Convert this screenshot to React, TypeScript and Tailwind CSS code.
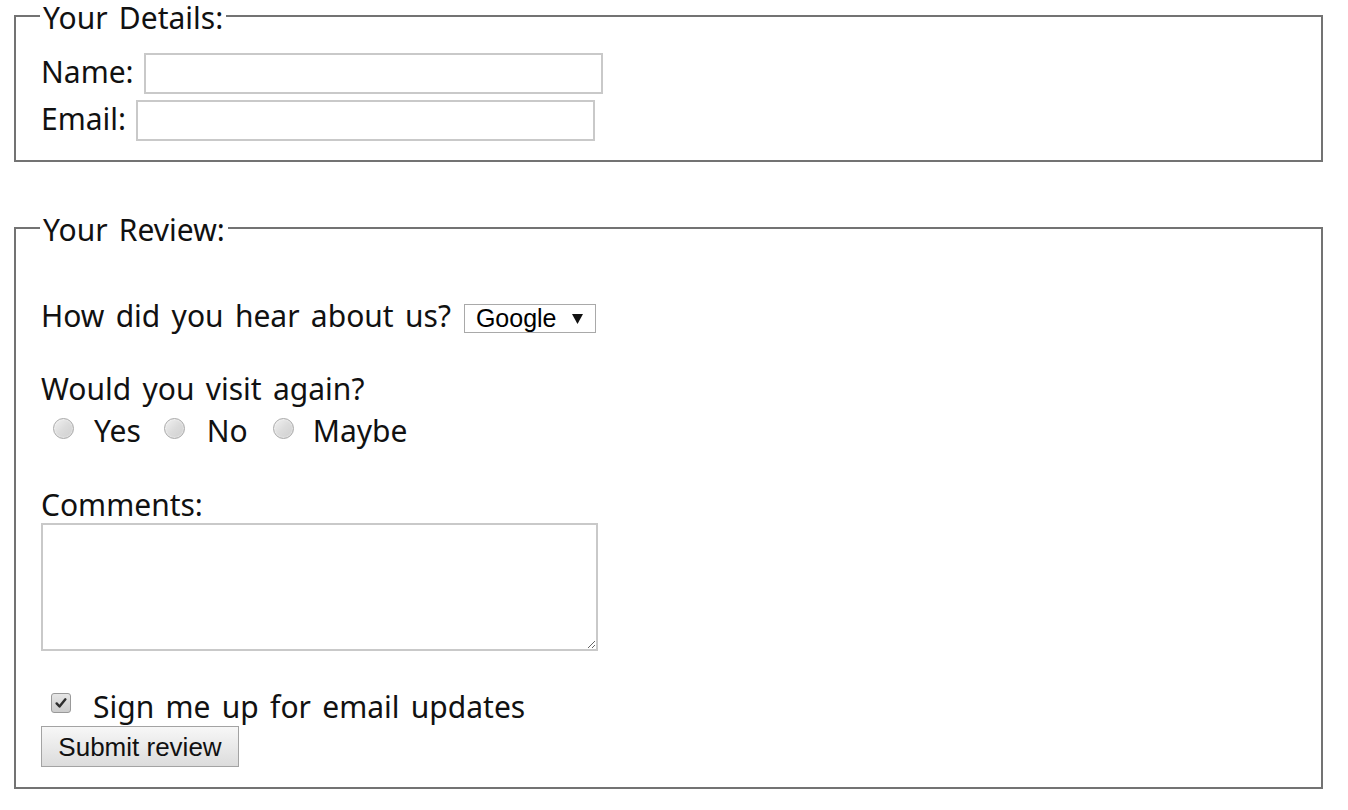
export default function App() {
  return (
    <div className="min-h-[810px] bg-white pl-[14px] pr-[25px] text-[30px] text-[#111] font-['Noto_Sans','Noto_Sans_CJK_KR',sans-serif] [word-spacing:3.5px]">
      <fieldset className="border-2 border-[#737373] pl-[25px] pt-[21px] pb-[19px]">
        <legend className="-ml-[1px] px-[3px] pt-[4px] leading-[28px]">Your Details:</legend>
        <div className="flex items-start">
          <span className="mr-[10px] leading-[37px]">Name:</span>
          <input type="text" className="h-[41px] w-[459px] border-2 border-[#c9c9c9] bg-white outline-none" />
        </div>
        <div className="mt-[6px] flex items-start">
          <span className="mr-[10px] leading-[37px]">Email:</span>
          <input type="text" className="h-[41px] w-[459px] border-2 border-[#c9c9c9] bg-white outline-none" />
        </div>
      </fieldset>

      <fieldset className="mt-[50px] border-2 border-[#737373] pl-[25px] pt-[49px] pb-[20px]">
        <legend className="-ml-[1px] px-[3px] pt-[4px] leading-[28px]">Your Review:</legend>

        <div className="flex items-start">
          <span className="pt-[2px] leading-[42px]">How did you hear about us?</span>
          <div className="ml-[13px] mt-[11px] flex h-[29px] w-[132px] items-center border border-[#a9a9a9] bg-white pl-[11px] pr-[12px] font-['Liberation_Sans',Arial,sans-serif] text-[25px] leading-none text-black [word-spacing:0px]">
            <span className="flex-1">Google</span>
            <svg viewBox="0 0 11 10" className="h-[10px] w-[11px]">
              <polygon points="0,0 11,0 5.5,10" fill="#111" />
            </svg>
          </div>
        </div>

        <div className="mt-[28px] pt-[3px] leading-[42px]">Would you visit again?</div>

        <div className="-mt-[3px] flex items-start leading-[42px]">
          <Radio />
          <span className="ml-[20px] mr-[11px] pt-[3px]">Yes</span>
          <Radio />
          <span className="ml-[22px] mr-[13px] pt-[3px]">No</span>
          <Radio />
          <span className="ml-[19px] pt-[3px]">Maybe</span>
        </div>

        <div className="mt-[32px] leading-[42px]">Comments:</div>
        <textarea className="-mt-[3px] block h-[128px] w-[557px] border-2 border-[#c9c9c9] bg-white outline-none" />

        <div className="mt-[32px] flex items-start leading-[42px]">
          <span className="ml-[10px] mt-[10px] flex h-[20px] w-[20px] items-center justify-center rounded-[3px] border border-[#999] bg-linear-to-b from-[#e6e6e6] to-[#cccccc]">
            <svg viewBox="0 0 16 16" className="h-[14px] w-[14px]">
              <path d="M3 8.5 L6.3 12 L13 3.8" fill="none" stroke="#2e2e2e" strokeWidth="2.8" strokeLinecap="round" strokeLinejoin="round" />
            </svg>
          </span>
          <span className="ml-[22px] pt-[3px]">Sign me up for email updates</span>
        </div>

        <button className="-mt-[2px] block h-[41px] w-[198px] border border-[#a3a3a3] bg-linear-to-b from-[#f7f7f7] to-[#dcdcdc] text-center font-['Liberation_Sans',Arial,sans-serif] text-[26px] leading-none text-[#111] [word-spacing:0px]">
          Submit review
        </button>
      </fieldset>
    </div>
  );
}

function Radio() {
  return (
    <span className="ml-[12px] mt-[11px] block h-[21px] w-[21px] shrink-0 rounded-full border border-[#a9a9a9] bg-linear-to-br from-[#f2f2f2] via-[#dcdcdc] to-[#cfcfcf] shadow-[inset_0_0_2px_rgba(255,255,255,0.9)]" />
  );
}
